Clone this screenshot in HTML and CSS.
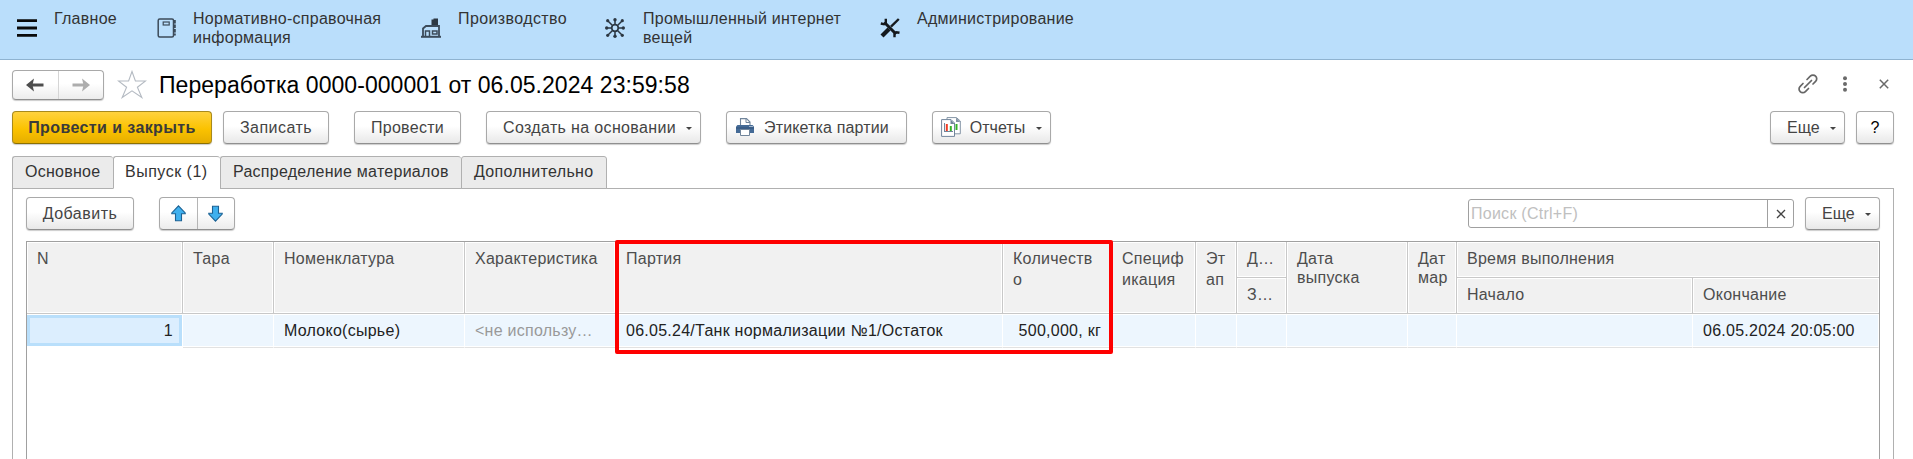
FILE: index.html
```html
<!DOCTYPE html>
<html lang="ru">
<head>
<meta charset="utf-8">
<title>Переработка</title>
<link rel="stylesheet" href="styles.css">
</head>
<body>
<nav class="menu">
  <svg class="burger" width="20" height="18" viewBox="0 0 20 18"><path d="M0 1.7h20M0 9h20M0 16.3h20" stroke="#0a0a0a" stroke-width="2.8"/></svg>
  <span class="item item-main"><span>Главное</span></span>
  <span class="item item-ref">
    <svg width="20" height="20" viewBox="0 0 20 20" fill="none" stroke="#3c4b5a"><rect x="1.2" y="1" width="15.3" height="18" rx="1.5" stroke-width="1.5"/><rect x="6.2" y="4" width="6" height="3" stroke-width="1.2"/><path d="M17.7 2v3.500M17.700 6.500v3.500M17.700 11v3.500M17.700 15.500v2" stroke-width="2.200"/></svg>
    <span>Нормативно-справочная<br>информация</span>
  </span>
  <span class="item item-prod">
    <svg width="20" height="20" viewBox="0 0 20 20"><path d="M10.500 1.500h2V.5H17V8h-6.500z" fill="#2c3742"/><path d="M2 18v-7.500L5 8h13v10" fill="none" stroke="#3c4b5a" stroke-width="1.800"/><path d="M0 18.800h20" stroke="#3c4b5a" stroke-width="2"/><path d="M4.500 18v-5h4v5M11.500 13h4.500v3h-4.500z" fill="none" stroke="#3c4b5a" stroke-width="1.500"/></svg>
    <span>Производство</span>
  </span>
  <span class="item item-iot">
    <svg width="20" height="20" viewBox="0 0 20 20" fill="#2c3742" stroke="#2c3742"><circle cx="10" cy="10" r="3.300" fill="none" stroke-width="1.700"/><path d="M10 2v4M10 14v4M2 10h4M14 10h4M3 3l4.500 4.500M12.500 12.500L17 17M17 3l-4.500 4.500M3 17l4.500-4.500" stroke-width="1.500"/><g stroke="none"><circle cx="10" cy="1.700" r="1.700"/><circle cx="10" cy="18.300" r="1.700"/><circle cx="1.700" cy="10" r="1.700"/><circle cx="18.300" cy="10" r="1.700"/><circle cx="2.700" cy="2.700" r="1.600"/><circle cx="17.300" cy="2.700" r="1.600"/><circle cx="2.700" cy="17.300" r="1.600"/><circle cx="17.300" cy="17.300" r="1.600"/></g></svg>
    <span>Промышленный интернет<br>вещей</span>
  </span>
  <span class="item item-adm">
    <svg width="20" height="20" viewBox="0 0 20 20" fill="none" stroke="#15191d"><path d="M4.500 4.500L16 16" stroke-width="3"/><path d="M5.800 .8v3.400L4 6.200.8 5.500M14.500 19.200v-3.200l1.800-1.800 3.200.6" stroke-width="2.400"/><path d="M18.800 1L11 8.700" stroke-width="2.400"/><path d="M9 11L2 18" stroke-width="4.200"/></svg>
    <span>Администрирование</span>
  </span>
</nav>

<header class="title-row">
  <span class="pair nav-pair">
    <span><svg width="18" height="14" viewBox="0 0 18 14"><path d="M17.500 7H4" stroke="#4d4d4d" stroke-width="3"/><path d="M0 7L8 .5 6.500 7 8 13.500z" fill="#4d4d4d"/></svg></span>
    <span><svg width="18" height="14" viewBox="0 0 18 14"><path d="M.5 7H14" stroke="#adadad" stroke-width="3"/><path d="M18 7L10 .5 11.500 7 10 13.500z" fill="#adadad"/></svg></span>
  </span>
  <svg class="star" width="30" height="29" viewBox="0 0 30 29"><path d="M15 1.500l3.400 9.500h10.200l-8.200 6.300 4.400 10.200-9.800-6.700-9.800 6.700 4.400-10.200L1.400 11h10.200z" fill="#fff" stroke="#b4bac2" stroke-width="1.100"/></svg>
  <h1 class="title">Переработка 0000-000001 от 06.05.2024 23:59:58</h1>
  <span class="window-icons">
    <svg width="20" height="20" viewBox="0 0 20 20" fill="none" stroke="#666" stroke-width="1.700" stroke-linecap="round"><path d="M6.500 13.500l7-7"/><path d="M9 5.500l3.300-3.300a3.600 3.600 0 0 1 5.300 0 3.600 3.600 0 0 1 0 5.200L15 10"/><path d="M5 9.500l-2.800 2.800a3.600 3.600 0 0 0 0 5.300 3.600 3.600 0 0 0 5.200 0L10.500 14.500"/></svg>
    <svg class="dots" width="6" height="16" viewBox="0 0 6 16" fill="#6a6a6a"><circle cx="3" cy="2.200" r="2"/><circle cx="3" cy="8" r="2"/><circle cx="3" cy="13.800" r="2"/></svg>
    <svg width="10" height="10" viewBox="0 0 10 10"><path d="M.8.8l8.400 8.400M9.200.8L.8 9.200" stroke="#6a6a6a" stroke-width="1.500"/></svg>
  </span>
</header>

<div class="commands">
  <button class="btn primary b1"><span>Провести и закрыть</span></button>
  <button class="btn b2"><span>Записать</span></button>
  <button class="btn b3"><span>Провести</span></button>
  <button class="btn b4"><span>Создать на основании</span><i class="caret"></i></button>
  <button class="btn b5"><svg width="18" height="18" viewBox="0 0 18 18"><path d="M4.500 8V.6h6L14 4v4" fill="#fff" stroke="#71859b" stroke-width="1.100"/><path d="M10 .6V4.500h4" fill="none" stroke="#71859b"/><path d="M1.500 7h15L18 8.500V15H0V8.500z" fill="#446a96"/><path d="M0 10h18" stroke="#31527a"/><path d="M13.500 8.500h1M15.500 8.500h1" stroke="#fff"/><path d="M4.500 11.500h9v6h-9z" fill="#fff" stroke="#71859b"/></svg><span>Этикетка партии</span></button>
  <button class="btn b6"><svg width="20" height="20" viewBox="0 0 20 20"><path d="M6 .6h9.500L19.300 4v12.800H6z" fill="#fff" stroke="#8494a5"/><path d="M15 .6V5h4.300z" fill="#8494a5"/><path d="M15.500 7v6" stroke="#35b228" stroke-width="2"/><path d="M.6 2.600h9.500L13.500 6v13.400H.6z" fill="#fff" stroke="#71859b"/><path d="M9.500 2.600V7h4z" fill="#71859b"/><path d="M3.500 6v9M3 14.500h9" stroke="#71859b"/><path d="M5.800 7v7" stroke="#f03b25" stroke-width="2"/><path d="M9.800 9v5" stroke="#35b228" stroke-width="2"/></svg><span>Отчеты</span><i class="caret"></i></button>
  <button class="btn more push"><span>Еще</span><i class="caret"></i></button>
  <button class="btn help"><span>?</span></button>
</div>

<div class="tabs">
  <span class="tab t1"><span>Основное</span></span>
  <span class="tab t2 active"><span>Выпуск (1)</span></span>
  <span class="tab t3"><span>Распределение материалов</span></span>
  <span class="tab t4"><span>Дополнительно</span></span>
</div>

<main class="panel">
  <div class="tools">
    <button class="btn add"><span>Добавить</span></button>
    <span class="pair move-pair">
      <span><svg width="15" height="17" viewBox="0 0 15 17"><path d="M7.500.8L14.200 8v.8h-3.700v7h-6v-7H.8V8z" fill="#3fb0ee" stroke="#1c6294" stroke-width="1.100"/></svg></span>
      <span><svg width="15" height="17" viewBox="0 0 15 17"><path d="M7.500 16.200L14.200 9v-.8h-3.700v-7h-6v7H.8V9z" fill="#3fb0ee" stroke="#1c6294" stroke-width="1.100"/></svg></span>
    </span>
    <span class="search push"><span class="placeholder">Поиск (Ctrl+F)</span><span class="clear"><svg width="10" height="10" viewBox="0 0 10 10"><path d="M1 1l8 8M9 1L1 9" stroke="#444" stroke-width="1.300"/></svg></span></span>
    <button class="btn more"><span>Еще</span><i class="caret"></i></button>
  </div>
  <section class="grid">
    <div class="head tall">N</div>
    <div class="head tall">Тара</div>
    <div class="head tall">Номенклатура</div>
    <div class="head tall">Характеристика</div>
    <div class="head tall">Партия</div>
    <div class="head tall">Количеств<br>о</div>
    <div class="head tall">Специф<br>икация</div>
    <div class="head tall">Эт<br>ап</div>
    <div class="head split">Д…</div>
    <div class="head tall tight">Дата<br>выпуска</div>
    <div class="head tall tight">Дат<br>мар</div>
    <div class="head split span2">Время выполнения</div>
    <div class="head low c9">З…</div>
    <div class="head low c12">Начало</div>
    <div class="head low c13">Окончание</div>
    <div class="cell selected">1</div>
    <div class="cell"></div>
    <div class="cell">Молоко(сырье)</div>
    <div class="cell muted">&lt;не использу…</div>
    <div class="cell">06.05.24/Танк нормализации №1/Остаток</div>
    <div class="cell num">500,000, кг</div>
    <div class="cell"></div>
    <div class="cell"></div>
    <div class="cell"></div>
    <div class="cell"></div>
    <div class="cell"></div>
    <div class="cell"></div>
    <div class="cell">06.05.2024 20:05:00</div>
    <div class="highlight"></div>
  </section>
</main>
</body>
</html>
```
FILE: styles.css
```css
* { box-sizing: border-box; }

body {
  margin: 0;
  height: 459px;
  overflow: hidden;
  display: flex;
  flex-direction: column;
  background: #fff;
  color: #333;
  font: 16px/19px "Liberation Sans", Arial, sans-serif;
  letter-spacing: .26px;
}

svg { display: block; flex: none; }

/* Sections menu */
.menu {
  flex: none;
  height: 60px;
  display: flex;
  align-items: flex-start;
  padding: 9px 0 0 17px;
  background: #badefb;
  border-bottom: 1px solid #8fb3d0;
}
.burger { margin: 10px 17px 0 0; }
.item { display: flex; white-space: nowrap; }
.item svg { margin-top: 9px; }
.item-main { width: 103px; }
.item-ref { width: 264px; gap: 16px; }
.item-prod { width: 184px; gap: 17px; letter-spacing: .4px; }
.item-iot { width: 275px; gap: 18px; }
.item-adm { gap: 17px; }

/* Title */
.title-row {
  flex: none;
  height: 51px;
  display: flex;
  padding: 10px 23px 0 12px;
}
.pair {
  display: flex;
  border: 1px solid #a9a9a9;
  border-bottom-color: #8f8f8f;
  border-radius: 4px;
  background: linear-gradient(#fff 45%, #ececec);
  box-shadow: 0 1px 1px #ccc;
}
.pair > span {
  flex: 1;
  display: flex;
  align-items: center;
  justify-content: center;
}
.pair > span + span { border-left: 1px solid #b5b5b5; }
.nav-pair { width: 92px; height: 30px; }
.nav-pair > span + span { border-left-color: #d5d5d5; }
.star { margin: 0 0 0 13px; }
.title {
  margin: 2px 0 0 12px;
  font-size: 23px;
  font-weight: 400;
  line-height: 26px;
  letter-spacing: .05px;
  color: #000;
  white-space: nowrap;
}
.window-icons {
  margin-left: auto;
  height: 28px;
  display: flex;
  align-items: center;
}
.window-icons .dots { margin: 0 31px 0 24px; }
.window-icons svg:last-child { margin-right: 1px; }

/* Buttons */
.btn {
  flex: none;
  height: 33px;
  display: flex;
  align-items: center;
  justify-content: center;
  padding: 0 0 1px;
  border: 1px solid #a9a9a9;
  border-bottom-color: #8f8f8f;
  border-radius: 4px;
  background: linear-gradient(#fff 45%, #e8e8e8);
  box-shadow: 0 1px 1px #ccc;
  color: #444;
  font: 16px/19px "Liberation Sans", Arial, sans-serif;
  white-space: nowrap;
}
.btn.primary {
  background: linear-gradient(#ffd23e, #fbc200 55%, #e6ae00);
  border-color: #a88a1c;
  border-bottom-color: #8c7000;
  color: #3a3a3a;
  font-weight: 700;
}
.caret {
  border: 3px solid transparent;
  border-top-color: #444;
  border-bottom: 0;
  margin: 2px 0 0 10px;
}
.push { margin-left: auto; }
.commands {
  flex: none;
  height: 45px;
  display: flex;
  padding: 0 19px 0 12px;
}
.b1 { width: 200px; margin-right: 11px; letter-spacing: .4px; }
.b2 { width: 106px; margin-right: 25px; letter-spacing: .45px; }
.b3 { width: 107px; margin-right: 25px; letter-spacing: .3px; }
.b4 { width: 215px; margin-right: 25px; letter-spacing: .35px; }
.b5 { width: 181px; margin-right: 25px; gap: 10px; padding-right: 8px; letter-spacing: .15px; }
.b6 { width: 119px; }
.b6 svg { margin-right: 9px; }
.b6 .caret { margin-left: 11px; }
.b4, .more { justify-content: flex-start; padding-left: 16px; }
.more { width: 75px; }
.help { width: 38px; margin-left: 11px; color: #000; }

/* Tabs */
.tabs {
  flex: none;
  display: flex;
  height: 33px;
  padding-left: 12px;
  margin-bottom: -1px;
  z-index: 1;
}
.tab {
  display: flex;
  padding: 5px 0 0 12px;
  border: 1px solid #b0b0b0;
  border-right: 0;
  border-radius: 3px 3px 0 0;
  background: #ebebeb;
  white-space: nowrap;
}
.tab.active { background: #fff; border-bottom-color: #fff; }
.t1 { width: 101px; }
.t2 { width: 107px; padding-left: 11px; letter-spacing: .5px; }
.t3 { width: 241px; }
.t4 { width: 146px; border-right: 1px solid #b0b0b0; letter-spacing: .33px; }

/* Panel */
.panel {
  flex: 1;
  min-height: 0;
  display: flex;
  flex-direction: column;
  margin: 0 19px 0 12px;
  padding: 8px 13px 0;
  border: 1px solid #b0b0b0;
  border-bottom: 0;
}
.tools { flex: none; height: 44px; display: flex; }
.add { width: 108px; margin-right: 25px; letter-spacing: .5px; }
.move-pair { width: 76px; height: 33px; }
.search {
  width: 326px;
  height: 29px;
  margin-top: 2px;
  margin-right: 11px;
  display: flex;
  border: 1px solid #a0a0a0;
  border-radius: 3px;
}
.placeholder { flex: 1; padding: 4px 0 0 2px; color: #c0c0c0; }
.clear {
  width: 26px;
  border-left: 1px solid #a0a0a0;
  display: flex;
  align-items: center;
  justify-content: center;
}

/* Table */
.grid {
  flex: 1;
  min-height: 0;
  position: relative;
  display: grid;
  grid-template-columns: 156px 91px 191px 151px 387px 109px 84px 41px 50px 121px 49px 236px 1fr;
  grid-template-rows: 36px 36px 34px;
  border: 1px solid #a0a0a0;
  border-bottom: 0;
}
.head, .cell { white-space: nowrap; overflow: hidden; }
.head {
  padding: 6px 0 0 10px;
  background: #f1f1f1;
  border-right: 1px solid #c8c8c8;
  border-bottom: 1px solid #c8c8c8;
  box-shadow: inset 0 0 0 1px #fff;
  color: #4d4d4d;
  line-height: 21px;
}
.tall { grid-row: 1 / 3; }
.tight { line-height: 19px; padding-top: 7px; }
.split { grid-row: 1; }
.low { grid-row: 2; }
.span2 { grid-column: 12 / 14; border-right: 0; }
.c9 { grid-column: 9; }
.c12 { grid-column: 12; }
.c13 { grid-column: 13; border-right: 0; }
.cell {
  grid-row: 3;
  padding: 7px 8px 0 10px;
  background: #edf6fe;
  border-right: 1px solid #fff;
  border-bottom: 1px solid #e2e2e2;
  box-shadow: inset 0 1px #fff, inset 0 -1px #fff;
  color: #222;
}
.muted { color: #999; }
.num { text-align: right; padding-right: 10px; }
.selected {
  height: 31px;
  margin: 1px 1px 0 0;
  padding: 3px 6px 0;
  border: 3px solid #b9dffb;
  box-shadow: none;
  background: #dceefe;
  text-align: right;
}
.highlight {
  position: absolute;
  left: 588px;
  top: -2px;
  width: 498px;
  height: 114px;
  border: 4px solid #fe0000;
  border-radius: 2px;
}
```
